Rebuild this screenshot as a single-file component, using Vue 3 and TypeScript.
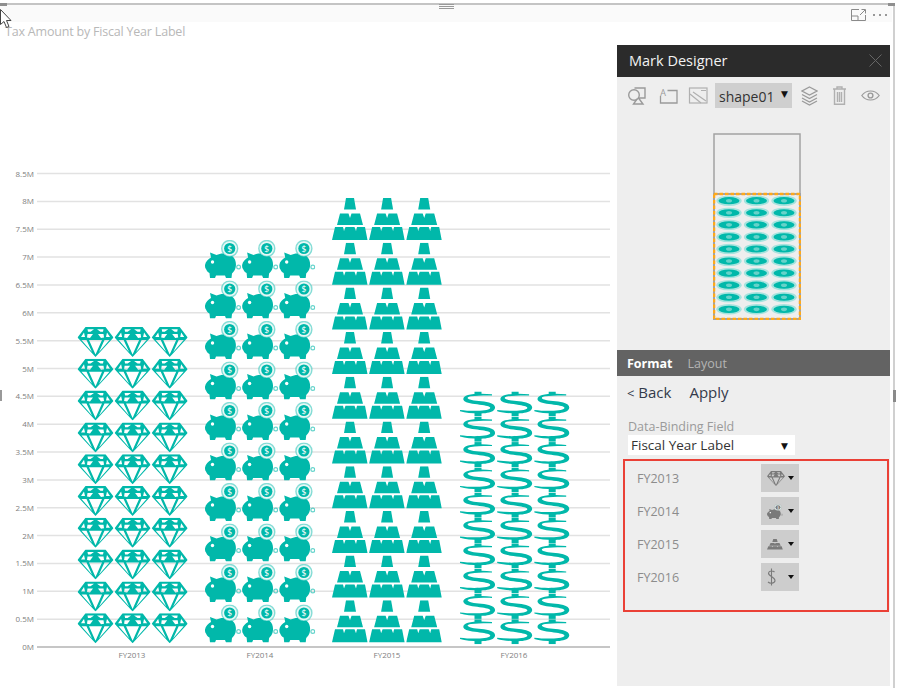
<script setup lang="ts">
interface Series { label: string; icon: string; x0: number; top: number; pitch: number; h: number; labelX: number }

const teal = '#01b8aa'

const series: Series[] = [
  { label: 'FY2013', icon: 'diamond', x0: 77.5, top: 327, pitch: 31.8, h: 30, labelX: 132 },
  { label: 'FY2014', icon: 'pig', x0: 205, top: 240, pitch: 40.5, h: 38, labelX: 260 },
  { label: 'FY2015', icon: 'gold', x0: 332, top: 198, pitch: 44.7, h: 44, labelX: 387 },
  { label: 'FY2016', icon: 'dollar', x0: 460, top: 391.5, pitch: 25.3, h: 25, labelX: 514 },
]

const cells = series.flatMap((s) =>
  Array.from({ length: 30 }, (_, i) => ({
    key: `${s.label}-${i}`,
    icon: s.icon,
    x: s.x0 + (i % 3) * 37.1,
    y: s.top + Math.floor(i / 3) * s.pitch,
    h: s.h,
  })),
)

const ticks = Array.from({ length: 18 }, (_, i) => ({
  label: `${i / 2}M`,
  y: 647 - i * 27.85,
}))

const previewCells = Array.from({ length: 30 }, (_, i) => ({
  key: i,
  cx: 16 + (i % 3) * 27.5,
  cy: 67.7 + Math.floor(i / 3) * 12.07,
}))

const bindings = [
  { label: 'FY2013', icon: 'diamond', w: 18, h: 15 },
  { label: 'FY2014', icon: 'pig', w: 16, h: 15 },
  { label: 'FY2015', icon: 'gold', w: 16, h: 11 },
  { label: 'FY2016', icon: 'plain', w: 9, h: 18 },
]
</script>

<template>
  <div class="page">
    <svg class="defs" width="0" height="0" aria-hidden="true">
      <defs>
        <symbol id="diamond" viewBox="0 0 36 30" preserveAspectRatio="none">
          <path
            fill="currentColor"
            fill-rule="evenodd"
            d="M8 0H28L36 10.500 18 30 0 10.500ZM10 2.300H16.500L13 4.800H10.500ZM19.500 2.300H26L25.500 4.800H23ZM6.500 5.500 3.500 10H7.500ZM29.500 5.500 32.500 10H28.500ZM10 7H15.500L12.500 11 9.500 10.500ZM20.500 7H26L26.500 10.500 23.500 11ZM11.500 13H24.500L18 27.500ZM4 13H9L14.500 25ZM27 13H32L21.500 25Z"
          />
        </symbol>
        <symbol id="pig" viewBox="0 0 36 38" preserveAspectRatio="none">
          <g fill="currentColor">
            <path d="M0 25C.5 21.500 3.500 19 6 17.500L5 12.500 11.500 15C16 12.500 23 13 27 16 31 19 31.500 24 30.500 28 30 30 28.500 32 27 33.500L26.500 38H21L20 35.500H11L10 38H5L4.500 33C2.500 32 1.500 30.500 1 29 0 28 0 26.500 0 25Z" />
            <circle cx="33.600" cy="27" r="1.900" fill="none" stroke="currentColor" stroke-width="1.200" opacity=".6" />
            <circle cx="24.700" cy="8.500" r="8" fill="#e8f8f6" stroke="currentColor" stroke-width="1.400" stroke-opacity=".45" />
            <circle cx="24.700" cy="8.500" r="5.600" />
          </g>
          <circle cx="7.500" cy="22" r="1.700" fill="#fff" />
          <text x="24.700" y="11.500" text-anchor="middle" font-size="8.500" font-family="'Open Sans',sans-serif" fill="#fff">$</text>
        </symbol>
        <symbol id="gold" viewBox="0 0 36 44" preserveAspectRatio="none">
          <g fill="currentColor">
            <polygon points="14,0 22,0 24,11.500 12,11.500" />
            <polygon points="8,15.500 16.500,15.500 18,20 19.500,15.500 28,15.500 31,27 5,27" />
            <polygon points="3,29 11,29 12,33 13.500,29 22.500,29 24,33 25,29 33,29 35.500,42 0,42" />
          </g>
        </symbol>
        <symbol id="dollar" viewBox="0 0 36 25" preserveAspectRatio="none">
          <g fill="currentColor">
            <path d="M32 2.800C24 1.800 13 2 8 3.500 3 5 2 8 5 10 8 12 16 12.500 22 13.500 29 14.500 31 15.500 30 17 28 19.500 12 20 0 18.500L0 19.700C10 22.500 28 23 33 19.500 37 16.500 35 12.500 29 11 23 9.500 14 9.500 10 8 6.500 7 7 5.300 11 4.800 17 4 26 3.800 32 4Z" />
            <rect x="14.500" y="0" width="7" height="3" />
            <rect x="14.500" y="21" width="7" height="4" />
          </g>
        </symbol>
        <symbol id="plain" viewBox="0 0 9 18" preserveAspectRatio="none">
          <path fill="none" stroke="currentColor" stroke-width="1.100" d="M7.500 4C6 2.500 2 2.500 1.500 5 1 8 8 9 8 12.500 8 15.500 3 16 1 14M4.500 .5V17.500" />
        </symbol>
        <symbol id="oval" viewBox="0 0 26 11">
          <ellipse cx="13" cy="5.500" rx="12.700" ry="5.300" fill="#a5e3de" />
          <ellipse cx="13" cy="5.500" rx="10.500" ry="3.600" fill="#01b8aa" />
          <ellipse cx="13" cy="5.500" rx="3" ry="1.800" fill="#66d2c9" />
        </symbol>
      </defs>
    </svg>

    <div class="frame">
      <div class="strip">
        <svg class="focus" viewBox="0 0 15 12" width="15" height="12">
          <path fill="none" stroke="#8a8a8a" d="M8 .5H.5V11.500H14.500V6M.5 7H7V11.500M9 6 14 1M10.500 .5H14.500V4.500" />
        </svg>
        <span class="dots"><i></i><i></i><i></i></span>
      </div>

      <div class="content">
        <div class="chart">
          <div class="chart-title">Tax Amount by Fiscal Year Label</div>
          <svg class="plot" viewBox="0 40 617 648" width="617" height="648">
            <g v-for="t in ticks" :key="t.label">
              <line x1="37" x2="610" :y1="t.y" :y2="t.y" :stroke="t.label === '0M' ? '#c6c6c6' : '#e2e2e2'" :stroke-width="t.label === '0M' ? 2 : 1.500" />
              <text x="34" :y="t.y + 3" text-anchor="end" class="tick">{{ t.label }}</text>
            </g>
            <use
              v-for="c in cells"
              :key="c.key"
              :href="`#${c.icon}`"
              :x="c.x"
              :y="c.y"
              width="36"
              :height="c.h"
              :color="teal"
            />
            <text v-for="s in series" :key="s.label" :x="s.labelX" y="658" text-anchor="middle" class="tick">{{ s.label }}</text>
          </svg>
        </div>

        <aside class="panel">
          <header class="panel-head">
            <span>Mark Designer</span>
            <svg viewBox="0 0 13 13" width="13" height="13"><path stroke="#666" stroke-width="1" d="M.5 .5 12.500 12.500M12.500 .5 .5 12.500" /></svg>
          </header>

          <div class="tools">
            <svg class="tool" viewBox="0 0 20 20" width="20" height="20">
              <g fill="none" stroke="#9a9a9a" stroke-width="1.400">
                <circle cx="6" cy="9" r="5.300" />
                <path d="M6.500 2H17V12H10M10.500 12 15 18H5.500L9 13" />
              </g>
            </svg>
            <svg class="tool t-text" viewBox="0 0 20 20" width="20" height="20">
              <path fill="none" stroke="#9a9a9a" stroke-width="1.300" d="M9.500 4.500H19V17H2.500V10" />
              <text x="5" y="9.500" text-anchor="middle" font-size="9" fill="#9a9a9a" font-family="'Open Sans',sans-serif">A</text>
            </svg>
            <svg class="tool t-image" viewBox="0 0 20 20" width="20" height="20">
              <g fill="none" stroke="#b0b0b0" stroke-width="1.200">
                <rect x="1.500" y="2" width="17.500" height="15" />
                <path d="M2 8 13 17M5 6 18 15M13 4.500H18" />
              </g>
            </svg>
            <div class="shape-select">shape01<span class="caret">▼</span></div>
            <svg class="tool t-layers" viewBox="0 0 17 20" width="17" height="20">
              <g fill="none" stroke="#9a9a9a" stroke-width="1.300">
                <path d="M8.500 1 16 5 8.500 9 1 5Z" />
                <path d="M1 8.500 8.500 12.500 16 8.500" />
                <path d="M1 12 8.500 16 16 12" />
                <path d="M1 15 8.500 19 16 15" />
              </g>
            </svg>
            <svg class="tool t-trash" viewBox="0 0 13 19" width="13" height="19">
              <g fill="none" stroke="#b0b0b0" stroke-width="1.400">
                <path d="M0 3H13M4 3V1H9V3M1.500 3V18.300H11.500V3M4.500 6V16M6.500 6V16M8.500 6V16" />
              </g>
            </svg>
            <svg class="tool t-eye" viewBox="0 0 19 13" width="19" height="13">
              <path fill="none" stroke="#9a9a9a" stroke-width="1.200" d="M.8 6.500C5 .5 14 .5 18.200 6.500 14 12.500 5 12.500 .8 6.500Z" />
              <circle cx="9.500" cy="6.500" r="2.400" fill="none" stroke="#9a9a9a" stroke-width="1.400" />
            </svg>
          </div>

          <svg class="preview" viewBox="0 0 88 187" width="88" height="187">
            <rect x="1" y="1" width="86" height="185" fill="none" stroke="#a3a3a3" stroke-width="1.500" />
            <rect x="1" y="61" width="86" height="125" fill="none" stroke="#a3a3a3" stroke-width="2" />
            <rect x="1" y="61" width="86" height="125" fill="none" stroke="#ffa91a" stroke-width="2.500" stroke-dasharray="3.500 2" />
            <use v-for="p in previewCells" :key="p.key" href="#oval" :x="p.cx - 13" :y="p.cy - 5.5" width="26" height="11" />
          </svg>

          <div class="tabs">
            <span class="tab-on">Format</span>
            <span class="tab-off">Layout</span>
          </div>

          <div class="actions">
            <span><small>&lt;</small> Back</span>
            <span>Apply</span>
          </div>

          <label class="field-label">Data-Binding Field</label>
          <div class="field-select">Fiscal Year Label<span class="caret">▼</span></div>

          <div class="bindings">
            <div v-for="b in bindings" :key="b.label" class="binding">
              <span class="binding-name">{{ b.label }}</span>
              <div class="binding-btn">
                <svg class="binding-icon" :width="b.w" :height="b.h"><use :href="`#${b.icon}`" :width="b.w" :height="b.h" /></svg>
                <span class="tri"></span>
              </div>
            </div>
          </div>
        </aside>
      </div>
    </div>

    <span class="mark mark-tl"></span>
    <span class="mark mark-tr"></span>
    <span class="grip"><i></i><i></i><i></i></span>
    <span class="side-left"></span>
    <span class="side-right"></span>
    <svg class="cursor" viewBox="0 0 12 21" width="12" height="21">
      <path fill="#fff" stroke="#444" stroke-width="1" d="M.5 .5V15.500L4 12.500 6.500 18.500 9 17.500 6.500 11.500H11Z" />
    </svg>
  </div>
</template>

<style scoped>
.page {
  position: relative;
  width: 900px;
  height: 688px;
  overflow: hidden;
  background: #fff;
  font-family: "Open Sans", "Noto Sans", sans-serif;
}
.defs {
  position: absolute;
}
.frame {
  width: 895px;
  height: 685px;
  margin-top: 3px;
  border-top: 2px solid #c4c4c4;
  border-right: 2px solid #d0d0d0;
  box-sizing: border-box;
}
.strip {
  height: 17px;
  background: #fafafa;
  display: flex;
  justify-content: flex-end;
  align-items: center;
  gap: 7px;
  padding-right: 5px;
  margin-right: 1px;
}
.focus {
  display: block;
  margin-top: 2px;
}
.dots {
  display: flex;
  gap: 4px;
  margin-top: 3px;
}
.dots i {
  width: 2px;
  height: 2px;
  background: #777;
  border-radius: 50%;
}
.content {
  display: flex;
}
.chart {
  width: 617px;
  flex: none;
}
.chart-title {
  height: 18px;
  padding-left: 5px;
  font-size: 12.5px;
  letter-spacing: -0.2px;
  line-height: 20px;
  color: #b8b8b8;
  white-space: nowrap;
}
.plot {
  display: block;
}
.tick {
  font-size: 8px;
  fill: #808080;
  font-family: "Open Sans", sans-serif;
}
.panel {
  width: 273px;
  height: 641px;
  margin-top: 23px;
  flex: none;
  background: #eee;
  display: flex;
  flex-direction: column;
}
.panel-head {
  height: 32px;
  flex: none;
  background: #2b2b2b;
  color: #f2f2f2;
  font-size: 14.5px;
  display: flex;
  align-items: center;
  justify-content: space-between;
  padding: 0 8px 2px 12px;
  box-sizing: border-box;
}
.tools {
  display: flex;
  align-items: center;
  height: 25px;
  margin-top: 6px;
  padding-left: 11px;
}
.tool {
  flex: none;
  display: block;
}
.t-text,
.t-image {
  margin-left: 10px;
}
.t-layers {
  margin-left: 9px;
}
.t-trash,
.t-eye {
  margin-left: 15px;
}
.shape-select {
  width: 77px;
  height: 25px;
  margin-left: 7px;
  box-sizing: border-box;
  padding-left: 4px;
  background: #cfcfcf;
  color: #333;
  font-size: 14px;
  line-height: 28px;
  white-space: nowrap;
  display: flex;
  justify-content: space-between;
}
.caret {
  color: #111;
  font-size: 9px;
  line-height: 22px;
  padding-right: 4px;
  font-family: "DejaVu Sans", sans-serif;
}
.preview {
  display: block;
  margin: 25px 0 0 96px;
}
.tabs {
  height: 26px;
  flex: none;
  margin-top: 30px;
  background: #636363;
  display: flex;
  align-items: center;
  gap: 15px;
  padding-left: 10px;
  font-size: 12.5px;
}
.tab-on {
  color: #fff;
  font-weight: 700;
}
.tab-off {
  color: #b4b4b4;
}
.actions {
  display: flex;
  gap: 18px;
  margin-top: 7px;
  padding-left: 10px;
  color: #333a4a;
  font-size: 15px;
  line-height: 19px;
}
.actions small {
  font-size: 13px;
}
.field-label {
  margin: 15px 0 0 11px;
  color: #9a9a9a;
  font-size: 12.5px;
  line-height: 17px;
}
.field-select {
  width: 167px;
  height: 20px;
  margin-left: 11px;
  padding: 0 3px;
  box-sizing: border-box;
  background: #fff;
  color: #333;
  font-size: 13.5px;
  line-height: 21px;
  display: flex;
  justify-content: space-between;
}
.bindings {
  width: 266px;
  height: 153px;
  margin: 4px 0 0 6px;
  border: 2px solid #ea4036;
  box-sizing: border-box;
  padding: 3px 0 0 12px;
  display: flex;
  flex-direction: column;
  gap: 5px;
}
.binding {
  display: flex;
  align-items: center;
  height: 28px;
}
.binding-name {
  width: 124px;
  color: #8c8c8c;
  font-size: 12.5px;
}
.binding-btn {
  width: 38px;
  height: 28px;
  background: #cdcdcd;
  color: #7a7a7a;
  display: flex;
  align-items: center;
  padding-left: 6px;
  box-sizing: border-box;
  position: relative;
}
.binding-icon {
  display: block;
}
.tri {
  position: absolute;
  right: 5px;
  top: 12px;
  border-left: 3px solid transparent;
  border-right: 3px solid transparent;
  border-top: 4px solid #111;
}
.mark {
  position: absolute;
  background: #8f8f8f;
}
.mark-tl {
  left: 0;
  top: 3px;
  width: 7px;
  height: 3px;
}
.mark-tr {
  left: 888px;
  top: 3px;
  width: 7px;
  height: 3px;
}
.grip {
  position: absolute;
  left: 439px;
  top: 4px;
  width: 15px;
  display: flex;
  flex-direction: column;
  gap: 1px;
}
.grip i {
  height: 1px;
  background: #999;
}
.side-left {
  position: absolute;
  left: 0;
  top: 390px;
  width: 2px;
  height: 11px;
  background: #999;
}
.side-right {
  position: absolute;
  left: 893px;
  top: 390px;
  width: 3px;
  height: 12px;
  background: #8a8a8a;
}
.cursor {
  position: absolute;
  left: 0;
  top: 9px;
}
</style>

<style>
body {
  margin: 0;
  background: #fff;
}
</style>
